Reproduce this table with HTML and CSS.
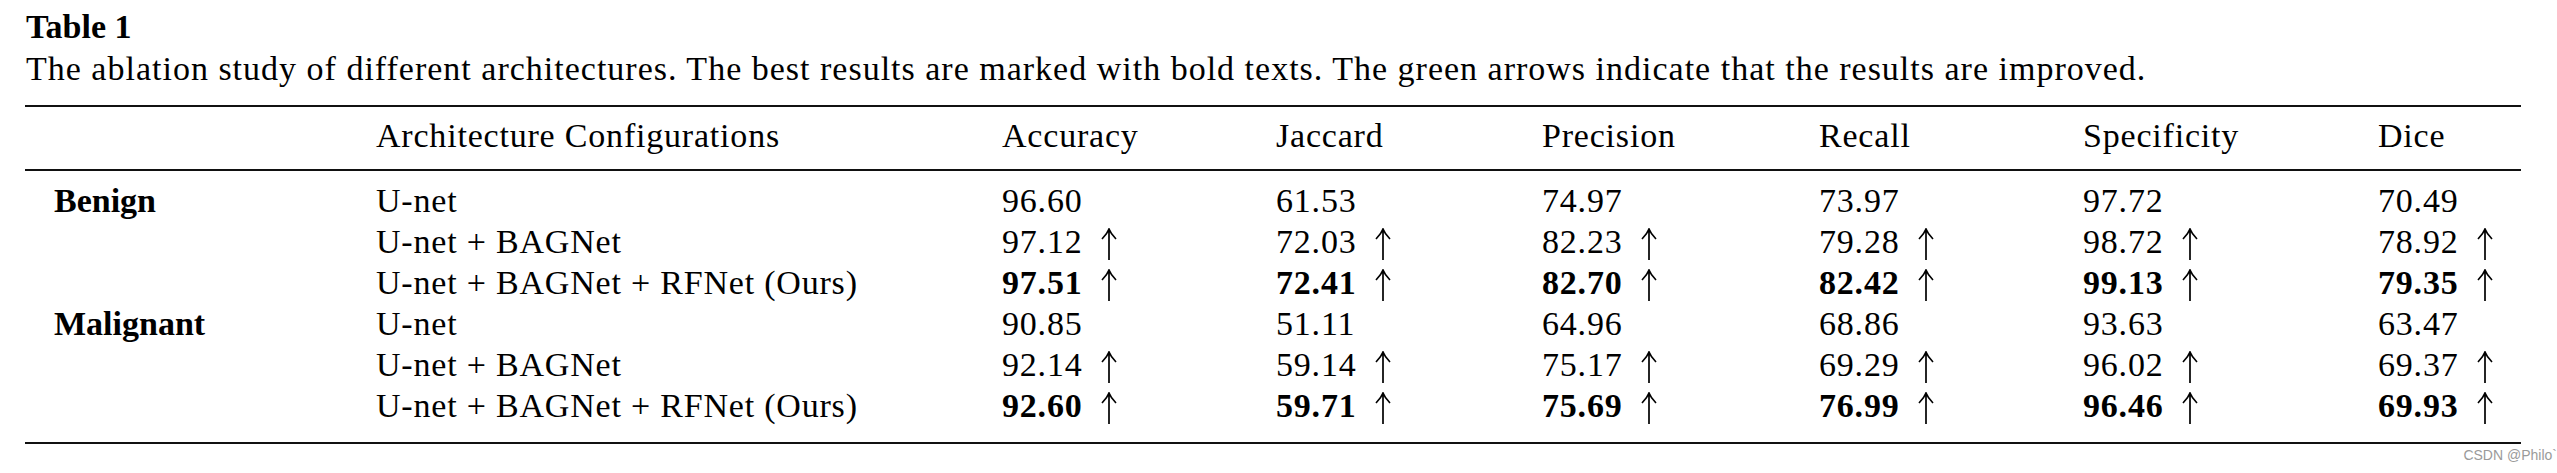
FILE: index.html
```html
<!DOCTYPE html>
<html lang="en">
<head>
  <meta charset="UTF-8">
  <title>Table 1</title>
  <link rel="stylesheet" href="styles.css">
</head>
<body>

  <div class="page">
    <div class="table-title">Table 1</div>
    <div class="table-caption">The ablation study of different architectures. The best results are marked with bold texts. The green arrows indicate that the results are improved.</div>

    <table class="results">
      <colgroup>
        <col class="c-group">
        <col class="c-config">
        <col class="c-acc">
        <col class="c-jac">
        <col class="c-pre">
        <col class="c-rec">
        <col class="c-spe">
        <col class="c-dice">
      </colgroup>
      <thead>
        <tr>
          <th></th>
          <th>Architecture Configurations</th>
          <th>Accuracy</th>
          <th>Jaccard</th>
          <th>Precision</th>
          <th>Recall</th>
          <th>Specificity</th>
          <th>Dice</th>
        </tr>
      </thead>
      <tbody>
        <tr class="first">
          <td class="group">Benign</td>
          <td>U-net</td>
          <td>96.60</td>
          <td>61.53</td>
          <td>74.97</td>
          <td>73.97</td>
          <td>97.72</td>
          <td>70.49</td>
        </tr>
        <tr>
          <td></td>
          <td>U-net + BAGNet</td>
          <td>97.12 <svg class="up" viewBox="0 0 16 32"><path d="M8 1V32M1 11C4 8 6.5 5 8 1C9.5 5 12 8 15 11"/></svg></td>
          <td>72.03 <svg class="up" viewBox="0 0 16 32"><path d="M8 1V32M1 11C4 8 6.5 5 8 1C9.5 5 12 8 15 11"/></svg></td>
          <td>82.23 <svg class="up" viewBox="0 0 16 32"><path d="M8 1V32M1 11C4 8 6.5 5 8 1C9.5 5 12 8 15 11"/></svg></td>
          <td>79.28 <svg class="up" viewBox="0 0 16 32"><path d="M8 1V32M1 11C4 8 6.5 5 8 1C9.5 5 12 8 15 11"/></svg></td>
          <td>98.72 <svg class="up" viewBox="0 0 16 32"><path d="M8 1V32M1 11C4 8 6.5 5 8 1C9.5 5 12 8 15 11"/></svg></td>
          <td>78.92 <svg class="up" viewBox="0 0 16 32"><path d="M8 1V32M1 11C4 8 6.5 5 8 1C9.5 5 12 8 15 11"/></svg></td>
        </tr>
        <tr>
          <td></td>
          <td>U-net + BAGNet + RFNet (Ours)</td>
          <td><b>97.51</b> <svg class="up" viewBox="0 0 16 32"><path d="M8 1V32M1 11C4 8 6.5 5 8 1C9.5 5 12 8 15 11"/></svg></td>
          <td><b>72.41</b> <svg class="up" viewBox="0 0 16 32"><path d="M8 1V32M1 11C4 8 6.5 5 8 1C9.5 5 12 8 15 11"/></svg></td>
          <td><b>82.70</b> <svg class="up" viewBox="0 0 16 32"><path d="M8 1V32M1 11C4 8 6.5 5 8 1C9.5 5 12 8 15 11"/></svg></td>
          <td><b>82.42</b> <svg class="up" viewBox="0 0 16 32"><path d="M8 1V32M1 11C4 8 6.5 5 8 1C9.5 5 12 8 15 11"/></svg></td>
          <td><b>99.13</b> <svg class="up" viewBox="0 0 16 32"><path d="M8 1V32M1 11C4 8 6.5 5 8 1C9.5 5 12 8 15 11"/></svg></td>
          <td><b>79.35</b> <svg class="up" viewBox="0 0 16 32"><path d="M8 1V32M1 11C4 8 6.5 5 8 1C9.5 5 12 8 15 11"/></svg></td>
        </tr>
        <tr>
          <td class="group">Malignant</td>
          <td>U-net</td>
          <td>90.85</td>
          <td>51.11</td>
          <td>64.96</td>
          <td>68.86</td>
          <td>93.63</td>
          <td>63.47</td>
        </tr>
        <tr>
          <td></td>
          <td>U-net + BAGNet</td>
          <td>92.14 <svg class="up" viewBox="0 0 16 32"><path d="M8 1V32M1 11C4 8 6.5 5 8 1C9.5 5 12 8 15 11"/></svg></td>
          <td>59.14 <svg class="up" viewBox="0 0 16 32"><path d="M8 1V32M1 11C4 8 6.5 5 8 1C9.5 5 12 8 15 11"/></svg></td>
          <td>75.17 <svg class="up" viewBox="0 0 16 32"><path d="M8 1V32M1 11C4 8 6.5 5 8 1C9.5 5 12 8 15 11"/></svg></td>
          <td>69.29 <svg class="up" viewBox="0 0 16 32"><path d="M8 1V32M1 11C4 8 6.5 5 8 1C9.5 5 12 8 15 11"/></svg></td>
          <td>96.02 <svg class="up" viewBox="0 0 16 32"><path d="M8 1V32M1 11C4 8 6.5 5 8 1C9.5 5 12 8 15 11"/></svg></td>
          <td>69.37 <svg class="up" viewBox="0 0 16 32"><path d="M8 1V32M1 11C4 8 6.5 5 8 1C9.5 5 12 8 15 11"/></svg></td>
        </tr>
        <tr class="last">
          <td></td>
          <td>U-net + BAGNet + RFNet (Ours)</td>
          <td><b>92.60</b> <svg class="up" viewBox="0 0 16 32"><path d="M8 1V32M1 11C4 8 6.5 5 8 1C9.5 5 12 8 15 11"/></svg></td>
          <td><b>59.71</b> <svg class="up" viewBox="0 0 16 32"><path d="M8 1V32M1 11C4 8 6.5 5 8 1C9.5 5 12 8 15 11"/></svg></td>
          <td><b>75.69</b> <svg class="up" viewBox="0 0 16 32"><path d="M8 1V32M1 11C4 8 6.5 5 8 1C9.5 5 12 8 15 11"/></svg></td>
          <td><b>76.99</b> <svg class="up" viewBox="0 0 16 32"><path d="M8 1V32M1 11C4 8 6.5 5 8 1C9.5 5 12 8 15 11"/></svg></td>
          <td><b>96.46</b> <svg class="up" viewBox="0 0 16 32"><path d="M8 1V32M1 11C4 8 6.5 5 8 1C9.5 5 12 8 15 11"/></svg></td>
          <td><b>69.93</b> <svg class="up" viewBox="0 0 16 32"><path d="M8 1V32M1 11C4 8 6.5 5 8 1C9.5 5 12 8 15 11"/></svg></td>
        </tr>
      </tbody>
    </table>

    <div class="watermark">CSDN @Philo`</div>
  </div>

</body>
</html>
```

FILE: styles.css
```css
* {
  box-sizing: border-box;
}

body {
  margin: 0;
  background: #ffffff;
  color: #000000;
  font-family: "Liberation Serif", "Times New Roman", serif;
  font-size: 34px;
  line-height: 41px;
  letter-spacing: 0.8px;
}

.page {
  position: relative;
  width: 2557px;
  height: 473px;
  padding: 6px 0 0 26px;
}

.table-title {
  font-weight: bold;
  letter-spacing: 0;
}

.table-caption {
  margin-top: 1px;
  letter-spacing: 1px;
}

.results {
  margin-top: 16px;
  width: 2496px;
  margin-left: -1px;
  border-collapse: collapse;
  table-layout: fixed;
  border-top: 2px solid #111;
  border-bottom: 2px solid #111;
}

.c-group { width: 351px; }
.c-config { width: 626px; }
.c-acc { width: 274px; }
.c-jac { width: 266px; }
.c-pre { width: 277px; }
.c-rec { width: 264px; }
.c-spe { width: 295px; }
.c-dice { width: 143px; }

.results th,
.results td {
  padding: 0;
  text-align: left;
  font-weight: normal;
  white-space: nowrap;
  vertical-align: baseline;
}

.results thead th {
  padding-top: 8px;
  padding-bottom: 13px;
  border-bottom: 2px solid #111;
}

.results tr.first td {
  padding-top: 9px;
}

.results tr.last td {
  padding-bottom: 16px;
}

.results td.group {
  padding-left: 29px;
  font-weight: bold;
  letter-spacing: 0;
}

.up {
  width: 16px;
  height: 32px;
  margin-left: 9px;
  vertical-align: -7px;
  fill: none;
  stroke: #000;
  stroke-width: 1.7;
}

.watermark {
  position: absolute;
  right: 0;
  bottom: 10px;
  font-family: "Liberation Sans", Arial, sans-serif;
  font-size: 14px;
  line-height: 16px;
  letter-spacing: 0;
  color: #9a9a9a;
}
```
